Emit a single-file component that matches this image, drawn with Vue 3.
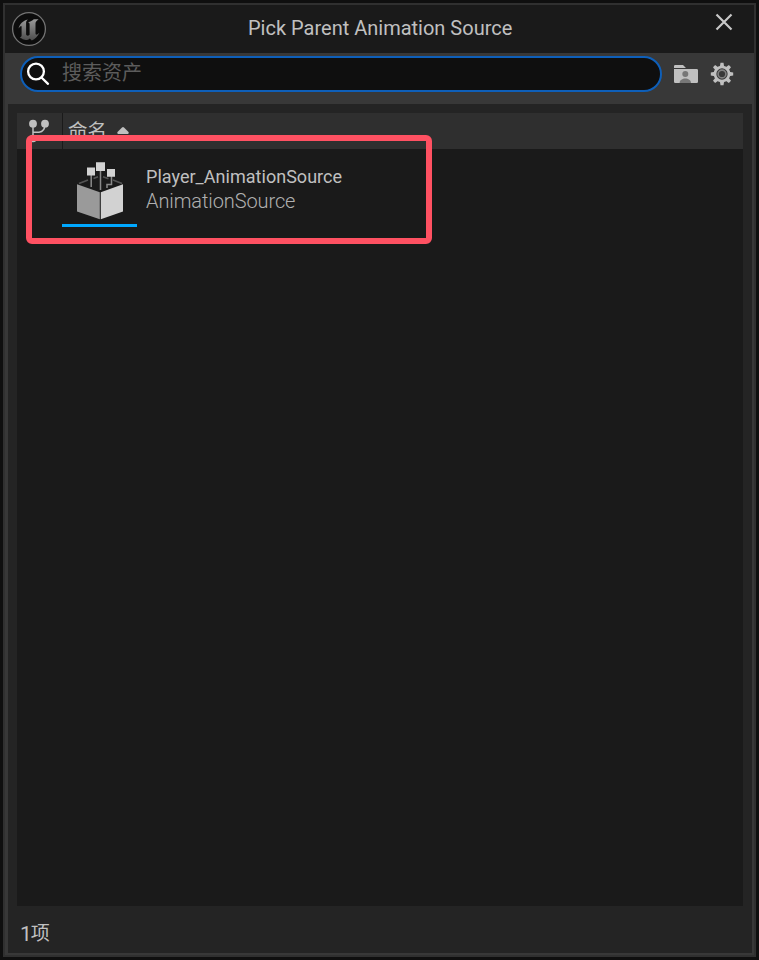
<script setup>
const title = 'Pick Parent Animation Source'
const assets = [{ name: 'Player_AnimationSource', type: 'AnimationSource' }]
</script>

<template>
  <div class="screen">
    <div class="window">
      <header class="titlebar">
        <svg class="logo" viewBox="0 0 36 36">
          <circle cx="18" cy="18" r="16.4" fill="#0c0c0c" stroke="#747474" stroke-width="1.3" />
          <path fill="url(#metal)" d="M7.5 17.5C8.5 13 12 9.6 16.8 8.4C15.4 9.6 15.1 10.7 15.1 12.3V23C15.1 24.9 17.1 25.2 18.6 23.8V13.2C18.6 12 18 11.4 17 11.2C19.6 10.7 21.2 9.6 22.8 8.2H27.6C25.3 9.8 24.5 11 24.5 12.8V22.6C24.5 24.2 26 24 28.4 21.8C26.8 25.5 24 28 20.8 29.5L18.8 27.5C16.7 29.4 13.3 29.6 10.8 27.6L8.8 26.7C10 26.3 10.6 25.6 10.6 24.3V16C10.6 14.2 9.3 14.9 7.5 17.5Z" />
          <defs>
            <linearGradient id="metal" x1="0" y1="0" x2="0" y2="1">
              <stop offset="0" stop-color="#999" />
              <stop offset=".45" stop-color="#777" />
              <stop offset="1" stop-color="#4c4c4c" />
            </linearGradient>
          </defs>
        </svg>
        <h1 class="title">{{ title }}</h1>
        <svg class="close" viewBox="0 0 20 20"><path d="M2.5 2.5L17.5 17.5M17.5 2.5L2.5 17.5" /></svg>
      </header>
      <div class="toolbar">
        <label class="search">
          <svg class="glass" viewBox="0 0 24 24"><circle cx="10" cy="9.5" r="7.9" /><path d="M15.5 15.5L22 21.8" /></svg>
          <span class="placeholder">搜索资产</span>
        </label>
        <svg class="folder" viewBox="0 0 24 18">
          <path fill="#c0c0c0" d="M0 3V1.2Q0 0 1.2 0H9L12 3ZM0 4H22.7Q24 4 24 5.3V16.7Q24 18 22.7 18H1.3Q0 18 0 16.7Z" />
          <circle cx="11.3" cy="9" r="3" fill="#777" />
          <path fill="#777" d="M5.6 18C5.6 12 17 12 17 18Z" />
        </svg>
        <svg class="gear" viewBox="-12 -12 24 24">
          <g fill="#c0c0c0"><path v-for="n in 8" :key="n" d="M-2.2 -7L-1.5 -11.2H1.5L2.2 -7Z" :transform="`rotate(${n * 45})`" /></g>
          <circle r="7" fill="#383838" stroke="#c0c0c0" stroke-width="2.7" />
          <circle r="3.9" fill="none" stroke="#808080" stroke-width="1.6" />
        </svg>
      </div>
      <main class="panel">
        <section class="list">
          <div class="list-head">
            <div class="revision">
              <svg viewBox="0 0 22 26"><g fill="#c0c0c0"><circle cx="5" cy="4.7" r="3.9" /><circle cx="17" cy="4.7" r="3.9" /><circle cx="5" cy="19.5" r="3.8" /></g><path fill="none" stroke="#c0c0c0" stroke-width="1.5" d="M5 5V20M5 13.2H11Q17 12.7 17 5" /></svg>
            </div>
            <div class="name-col"><span>命名</span><svg class="sort" viewBox="0 0 12 8"><path d="M6 0Q6.5 0 7 .5L11.5 5Q12 5.7 11.5 6.4L11 7H1L.5 6.4Q0 5.7 .5 5L5 .5Q5.5 0 6 0Z" /></svg></div>
          </div>
          <div v-for="asset in assets" :key="asset.name" class="asset">
            <div class="thumb">
              <svg viewBox="0 0 50 60">
                <path fill="none" stroke="#555" stroke-width="1.7" d="M4 22.5L13 19M18.5 17.5L23 15.7M28 15.7L33.5 17.8M38 19L47 22.5" />
                <path fill="none" stroke="#8a8a8a" stroke-width="1.5" d="M16.2 12V26M25.5 7V29M36.5 14V23.5H32V27" />
                <path fill="#9a9a9a" d="M2 23.3L24.8 31.3V58.2L2 50.5Z" />
                <path fill="#d2d2d2" d="M25.8 31.3L48 23.3V50.5L25.8 58.2Z" />
                <path fill="#d2d2d2" d="M12 6.5H20V14.5H12ZM21 1.3H30V10H21ZM32 8H40V15.7H32Z" />
              </svg>
            </div>
            <div class="labels"><div class="asset-name">{{ asset.name }}</div><div class="asset-type">{{ asset.type }}</div></div>
          </div>
        </section>
        <footer class="status"><span class="count">{{ assets.length }}</span>项</footer>
      </main>
    </div>
    <div class="highlight"></div>
  </div>
</template>

<style>
body { margin: 0; background: #0f0f0f; }
</style>

<style scoped>
* { box-sizing: border-box; }
svg { display: block; flex: none; }
.screen { position: relative; width: 759px; height: 960px; padding: 3px; background: #0f0f0f; font-family: Roboto, "Noto Sans CJK SC", sans-serif; color: #c0c0c0; }
.window { display: flex; flex-direction: column; height: 954px; border: 2px solid #303030; background: #383838; }
.titlebar { display: flex; align-items: flex-start; height: 48px; background: #1a1a1a; }
.logo { width: 36px; height: 36px; margin: 6px 0 0 6px; }
.title { flex: 1; margin: 9px 0 0 201px; font-size: 20px; line-height: 28px; font-weight: 400; white-space: nowrap; }
.close { width: 20px; height: 20px; margin: 7px 20.5px 0 0; fill: none; stroke: #c8c8c8; stroke-width: 2.2; }
.toolbar { display: flex; height: 51px; padding: 3px 20px 0 15px; }
.search { display: flex; width: 642px; height: 36px; padding-left: 4px; border: 2px solid #0e5fb9; border-radius: 18px; background: #0f0f0f; }
.glass { width: 24px; height: 24px; margin-top: 4px; fill: none; stroke: #fff; stroke-width: 2.3; stroke-linecap: round; }
.placeholder { margin: 2px 0 0 12px; font-size: 20px; line-height: 26px; color: #5c5c5c; }
.folder { width: 24px; height: 18px; margin: 9px 0 0 12px; }
.gear { width: 24px; height: 24px; margin: 6px 0 0 12px; }
.panel { flex: 1; margin: 0 2px 2px 3px; padding: 9px 9px 0; background: #242424; }
.list { height: 793px; background: #1a1a1a; }
.list-head { display: flex; height: 36px; background: #2f2f2f; }
.revision { width: 46px; padding: 6px 0 0 11px; border-right: 1px solid #1a1a1a; }
.revision svg { width: 22px; height: 26px; }
.name-col { display: flex; padding-left: 5px; font-size: 19.5px; line-height: 38px; }
.sort { width: 12px; height: 8px; margin: 14px 0 0 10px; fill: #c0c0c0; }
.asset { display: flex; padding: 3px 0 0 45px; }
.thumb { width: 75px; height: 75px; padding: 9px 0 0 13px; border-bottom: 3px solid #00a8ff; }
.thumb svg { width: 50px; height: 60px; }
.labels { padding: 12px 0 0 9px; line-height: 25px; }
.asset-name { font-size: 18px; letter-spacing: .03px; }
.asset-type { font-size: 20px; font-weight: 300; letter-spacing: -.1px; color: #b0b0b0; }
.status { display: flex; padding: 14px 0 0 3px; font-size: 19px; line-height: 28px; }
.count { font-size: 21px; letter-spacing: -1px; }
.highlight { position: absolute; left: 26px; top: 135px; width: 406px; height: 109px; border: 6px solid #ff5162; border-radius: 6px; }
</style>
